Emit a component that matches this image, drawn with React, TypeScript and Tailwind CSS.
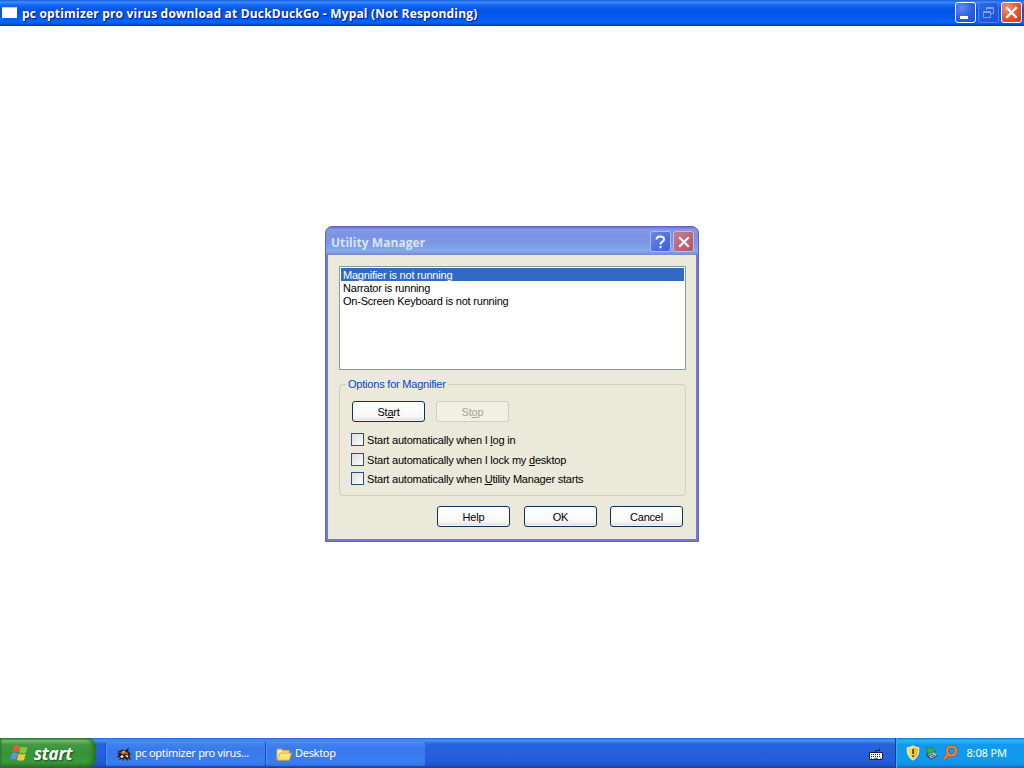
import type { ReactNode } from "react";
import clsx from "clsx";

const utilities = [
  "Magnifier is not running",
  "Narrator is running",
  "On-Screen Keyboard is not running",
];

function CloseGlyph({ size }: { size: number }) {
  return (
    <svg width={size} height={size} viewBox="0 0 12 12">
      <path d="M1.2 1.2 10.8 10.8M10.8 1.2 1.2 10.8" stroke="#fff" strokeWidth="2.1" />
    </svg>
  );
}

function CaptionButton({ className, children }: { className: string; children: ReactNode }) {
  return (
    <div className={clsx("flex items-center justify-center rounded-[3px] border", className)}>
      {children}
    </div>
  );
}

function WindowTitleBar() {
  return (
    <header className="flex h-[26px] shrink-0 items-center bg-[linear-gradient(to_bottom,#1c5ae0_0%,#3a8cfc_8%,#1268f4_20%,#0555e6_38%,#0458ee_65%,#0664fc_85%,#0350dc_94%,#0138b0_100%)] pb-px pl-[2px] pr-[2px]">
      <div className="h-[11px] w-[15px] border-t border-[#b8d4f8] bg-white" />
      <h1 className="ml-[5px] mt-[2px] whitespace-pre font-['Open_Sans',sans-serif] text-[12px] font-bold tracking-[0.19px] text-white [text-shadow:1px_1px_1px_#0a1883]">
        pc optimizer pro virus download at DuckDuckGo - Mypal (Not Responding)
      </h1>
      <div className="ml-auto flex gap-[2px]">
        <CaptionButton className="size-[21px] border-white bg-[radial-gradient(circle_at_30%_25%,#5c8cf0,#2860e0_55%,#1c50d4)]">
          <div className="mr-[4px] mt-[10px] h-[3px] w-[8px] bg-white" />
        </CaptionButton>
        <CaptionButton className="size-[21px] border-[#5080e8] bg-[linear-gradient(135deg,#3068e8,#1850d8)]">
          <svg width="13" height="13" viewBox="0 0 13 13" fill="none" stroke="#7ea4f0">
            <path d="M4.5 4V1.5h7v6H9M4.5 2.5h7M1.5 5.5h7v6h-7zM1.5 6.5h7" />
          </svg>
        </CaptionButton>
        <CaptionButton className="size-[21px] border-white bg-[radial-gradient(circle_at_30%_25%,#f09478,#e05430_55%,#cc3c14)]">
          <CloseGlyph size={13} />
        </CaptionButton>
      </div>
    </header>
  );
}

function PushButton({ disabled, children }: { disabled?: boolean; children: ReactNode }) {
  return (
    <button
      className={clsx(
        "h-[21px] w-[73px] rounded-[3px] border pt-px text-center leading-[18px]",
        disabled
          ? "border-[#cfcdbb] bg-[#f1f0e4] text-[#a5a391]"
          : "border-[#12305c] bg-[linear-gradient(to_bottom,#fff,#f8f8f6_75%,#dcdcdc)] shadow-[inset_0_0_0_1px_rgba(255,255,255,0.6)]",
      )}
    >
      {children}
    </button>
  );
}

function CheckOption({ children }: { children: ReactNode }) {
  return (
    <label className="flex h-[13px] items-center gap-[3px] whitespace-pre">
      <span className="size-[13px] border border-[#285088] bg-[linear-gradient(135deg,#dcdcd8,#fff)]" />
      <span className="pt-[2px]">{children}</span>
    </label>
  );
}

function UtilityManager() {
  return (
    <section className="flex h-[316px] w-[374px] flex-col rounded-t-[7px] border border-[#6560b8] bg-[#7478d4] font-['Liberation_Sans',Arial,sans-serif] text-[11px] tracking-[-0.21px] text-black">
      <header className="flex h-[28px] shrink-0 items-center rounded-t-[6px] bg-[linear-gradient(to_bottom,#7470cc_0%,#849be8_10%,#7b93e2_30%,#7c97e6_60%,#84aaec_85%,#7688d8_100%)] pl-[5px] pr-[4px]">
        <h2 className="mt-[4px] font-['Open_Sans',sans-serif] text-[12px] font-bold tracking-[0.05px] text-[#d8e4f8]">
          Utility Manager
        </h2>
        <div className="ml-auto mt-px flex gap-[2px]">
          <CaptionButton className="size-[21px] border-[#a8bcf4] bg-[linear-gradient(135deg,#6688e8,#3860dc)]">
            <svg width="11" height="14" viewBox="0 0 11 14" fill="none" stroke="#fff" strokeWidth="2">
              <path d="M1.500 4.500Q1.500 1.500 5.300 1.500T9 4.300Q9 6 7 7 5.500 7.800 5.500 9.500M5.500 11v2.200" />
            </svg>
          </CaptionButton>
          <CaptionButton className="size-[21px] border-[#c4b8e0] bg-[linear-gradient(135deg,#c47c90,#b45468)]">
            <CloseGlyph size={12} />
          </CaptionButton>
        </div>
      </header>
      <div className="mx-[2px] mb-[2px] flex-1 bg-[#ebe9d9] pl-[11px] pr-[10px] pt-[11px]">
        <ul className="h-[104px] border border-[#8a98a8] bg-white p-px">
          {utilities.map((name, i) => (
            <li
              key={name}
              className={clsx("h-[13px] pl-[2px] leading-[14px]", i === 0 && "bg-[#316ac5] text-white")}
            >
              {name}
            </li>
          ))}
        </ul>
        <fieldset className="mt-[7px] h-[119px] rounded-[4px] border border-[#d0cfbf] pl-[11px]">
          <legend className="ml-[-5px] px-[2px] leading-[14px] text-[#0046d5]">
            Options for Magnifier
          </legend>
          <div className="ml-px mt-[10px] flex gap-[11px]">
            <PushButton>
              St<u>a</u>rt
            </PushButton>
            <PushButton disabled>
              St<u>o</u>p
            </PushButton>
          </div>
          <div className="mt-[11px] flex flex-col">
            <CheckOption>
              Start automatically when I <u>l</u>og in
            </CheckOption>
            <div className="mt-[7px]">
              <CheckOption>
                Start automatically when I lock my <u>d</u>esktop
              </CheckOption>
            </div>
            <div className="mt-[6px]">
              <CheckOption>
                Start automatically when <u>U</u>tility Manager starts
              </CheckOption>
            </div>
          </div>
        </fieldset>
        <div className="mt-[10px] flex justify-end gap-[13px] pr-[3px]">
          <div className="mr-px">
            <PushButton>Help</PushButton>
          </div>
          <PushButton>OK</PushButton>
          <PushButton>Cancel</PushButton>
        </div>
      </div>
    </section>
  );
}

function WindowsFlag() {
  return (
    <svg width="19" height="18" viewBox="0 0 19 18">
      <path d="M4 2.2Q7 .4 9.5 2L8 8.2Q5.500 6.800 2.200 8.300Z" fill="#ee5b2b" />
      <path d="M10.400 2.500Q13.500 4.200 17.500 2.400L16 8.800Q12.500 10.300 8.900 8.600Z" fill="#82c83c" />
      <path d="M2 9.300Q5 7.900 7.700 9.200L6 15.600Q3.500 14 .3 15.600Z" fill="#5b92f0" />
      <path d="M8.600 9.700Q12 11.200 15.700 9.800L14 16Q10.800 17.600 7 16Z" fill="#fbc92e" />
    </svg>
  );
}

function MypalIcon() {
  return (
    <svg width="16" height="16" viewBox="0 0 16 16">
      <path d="M1 3.500 4 4 6 2.500 9 3.500 13 .5 12 4 15 7 13.500 8.500 15 13 12 11.500 11.500 14 9 11 7 14 6.500 11.500 3 13 4 10 .5 10.500 3 7.500 1 6 4 5.500Z" fill="#2b1d12" />
      <path d="M4 5.500 7 4 11 5 12.500 8 10 7 6 7.500Z" fill="#b06c38" />
      <path d="M4 9.500 6.500 8 8 10 5.500 11ZM9 8.500 11.500 8 12.500 11 10.500 10Z" fill="#f4e6cc" />
      <path d="M6 4.500 8 3.500 9 5 7 6Z" fill="#e6b47c" />
    </svg>
  );
}

function FolderIcon() {
  return (
    <svg width="16" height="16" viewBox="0 0 16 16">
      <path d="M.5 12.500V2.500Q.5 1.500 1.500 1.500H5.500L7 3H13.500V6H15.500L13.500 13.500H1.500Z" fill="#e0b040" />
      <path d="M1.500 3H5.500L6.500 4.500H12.500V12H1.500Z" fill="#fff0a4" />
      <path d="M4 6H15.500L13.300 13.200H1.500Z" fill="#ffe478" stroke="#bf962c" strokeWidth=".7" />
    </svg>
  );
}

function KeyboardIcon() {
  return (
    <svg width="14" height="14" viewBox="0 0 14 14">
      <path d="M6.500 5V3.500H10.500V1.500" fill="none" stroke="#10204c" />
      <path d="M.5 5.500h13v7H.5z" fill="#f7f7f2" stroke="#10204c" />
      <path d="M2 7.500h10M2 9.500h10" stroke="#222c44" strokeDasharray="1 1" />
      <path d="M2 11.300h1M5 11.300h4M11 11.300h1" stroke="#222c44" strokeWidth=".8" />
    </svg>
  );
}

function ShieldIcon() {
  return (
    <svg width="14" height="16" viewBox="0 0 14 16">
      <path d="M7 .8Q10 2.800 12.800 2.800 13.500 11.500 7 15.200.5 11.500 1.200 2.800 4 2.800 7 .8Z" fill="#fbdc48" stroke="#e9efe9" />
      <path d="M7 2Q9.500 3.700 12 3.800 12.500 10.800 7 14Z" fill="#efbd28" />
      <path d="M7 4v5M7 10.300v1.700" stroke="#3a3413" strokeWidth="1.500" />
    </svg>
  );
}

function SafelyRemoveIcon() {
  return (
    <svg width="15" height="16" viewBox="0 0 15 16">
      <path d="M3 8 9 6 14 11 7 15 2 11Z" fill="#405a6c" />
      <path d="M4 9 9 7 13 10 7 13.500Z" fill="#b9cbd0" />
      <path d="M5 10.500 9 9M7 12 11 10" stroke="#33536c" />
      <path d="M1 1.500 4 3 8 2 8 4.500 12 6 5.500 8.500 2 7 4 5.500Z" fill="#35b548" stroke="#187f30" strokeWidth=".6" />
    </svg>
  );
}

function SearchIcon() {
  return (
    <svg width="16" height="16" viewBox="0 0 16 16" fill="none">
      <path d="M6.300 9.500 1.800 14.200" stroke="#8a4a22" strokeWidth="3.800" />
      <circle cx="9.500" cy="6" r="4.500" stroke="#8a4a22" strokeWidth="3" />
      <circle cx="9.500" cy="6" r="4.500" stroke="#f28a30" strokeWidth="2.200" />
      <path d="M6.300 9.500 1.800 14.200" stroke="#ee7e26" strokeWidth="2.600" />
    </svg>
  );
}

function TaskButton({ icon, children }: { icon: ReactNode; children: ReactNode }) {
  return (
    <div className="flex h-[24px] w-[159px] items-center gap-[3px] rounded-[2px] border-l border-t border-[#5590f4] bg-[linear-gradient(to_bottom,#4083f2,#3879ee_30%,#3a7df0_85%,#3070e0)] pl-[9px] text-[11px] tracking-[-0.3px] text-white shadow-[-1px_0_0_#1f50bd]">
      {icon}
      <span className="mt-[-2px] whitespace-nowrap">{children}</span>
    </div>
  );
}

function Taskbar() {
  return (
    <footer className="flex h-[30px] shrink-0 bg-[linear-gradient(to_bottom,#2868d8_0%,#4890f8_8%,#2863de_20%,#245ddb_75%,#2355cc_88%,#1941a5_100%)] font-['Noto_Sans',sans-serif]">
      <div className="flex w-[96px] items-center rounded-r-[9px] bg-[linear-gradient(to_bottom,#2f7530_0%,#74bd70_9%,#429944_22%,#359438_50%,#3a9a3b_80%,#256e27_100%)] pl-[10px] shadow-[inset_-5px_0_5px_-2px_#206e24,inset_1px_0_2px_#2b702d]">
        <WindowsFlag />
        <span className="ml-[5px] font-['Open_Sans',sans-serif] text-[17px] font-bold italic leading-none tracking-[-0.2px] text-white [text-shadow:1px_1px_2px_#1a4a1b]">
          start
        </span>
      </div>
      <div className="ml-[10px] flex items-center gap-px pt-[2px]">
        <TaskButton icon={<MypalIcon />}>pc optimizer pro virus...</TaskButton>
        <TaskButton icon={<FolderIcon />}>Desktop</TaskButton>
      </div>
      <div className="ml-auto mr-[12px] flex items-center pt-[2px]">
        <KeyboardIcon />
      </div>
      <div className="flex w-[129px] items-center border-l border-[#0c3d9c] bg-[linear-gradient(to_bottom,#1080d8_0%,#30b4f8_9%,#1498ec_22%,#109aed_70%,#1590e4_88%,#0d6ab8_100%)] pl-[10px] pr-[17px] shadow-[inset_1px_0_0_#35b4f5]">
        <ShieldIcon />
        <div className="ml-[4px]">
          <SafelyRemoveIcon />
        </div>
        <div className="ml-[3px]">
          <SearchIcon />
        </div>
        <span className="ml-auto whitespace-nowrap text-[11px] tracking-[-0.1px] text-white">8:08 PM</span>
      </div>
    </footer>
  );
}

export default function App() {
  return (
    <div className="flex h-[768px] w-[1024px] cursor-default select-none flex-col overflow-hidden bg-white">
      <WindowTitleBar />
      <main className="flex flex-1 items-start justify-center pt-[200px]">
        <UtilityManager />
      </main>
      <Taskbar />
    </div>
  );
}
